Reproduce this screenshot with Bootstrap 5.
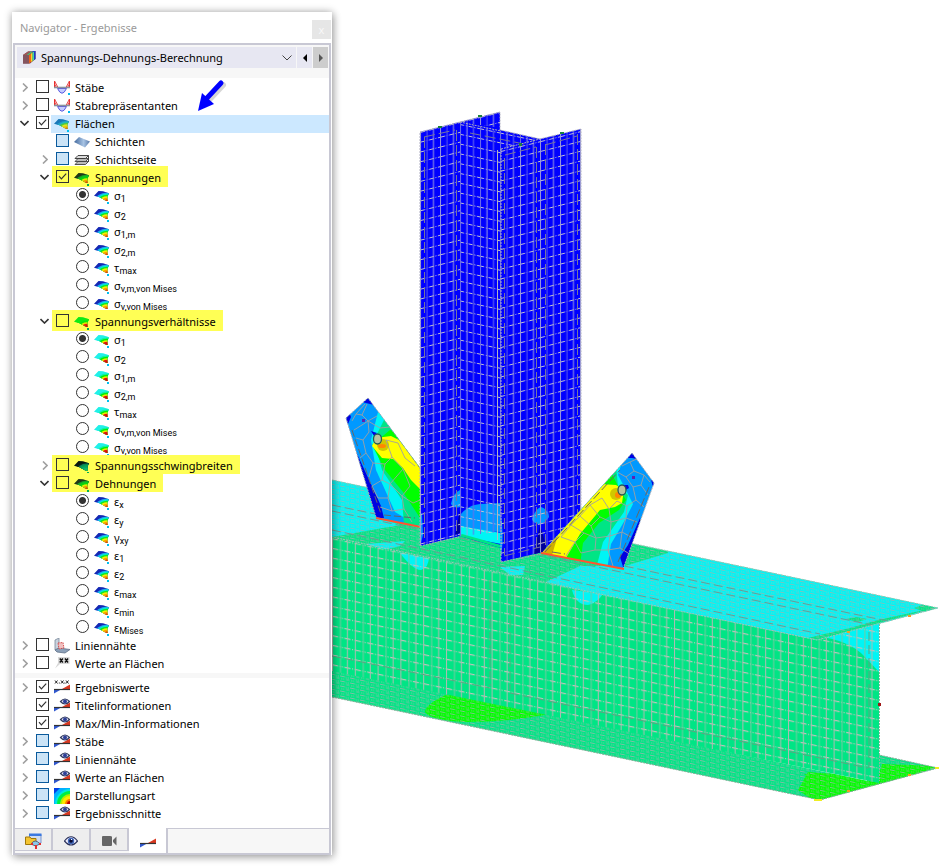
<!DOCTYPE html>
<html lang="de">
<head>
<meta charset="utf-8">
<meta name="viewport" content="width=device-width, initial-scale=1">
<title>Navigator - Ergebnisse</title>
<link href="https://cdn.jsdelivr.net/npm/bootstrap@5.3.0/dist/css/bootstrap.min.css" rel="stylesheet">
<style>
:root { --edge: #c8c8d4; --tint: #e7e7f2; }
body { font-family: "Noto Sans", "Open Sans", sans-serif; font-size: 11px; line-height: 18px; color: #000; background: #fff; }
.navigator { width: 320px; margin: 12px 0 11px 12px; background: #fff; box-shadow: 0 0 8px rgba(0,0,0,.3), 2px 3px 8px rgba(0,0,0,.2); z-index: 2; }
.nav-title { height: 31px; padding: 0 1px 0 8px; color: #9a9a9a; }
.close-btn { width: 19px; height: 19px; border: 0; background: #e6e6e6; color: #f8f8f8; font-size: 11px; line-height: 16px; }
.frame { margin: 0 1px 0 1px; border: 2px solid var(--edge); background: #f7f7f7; }
.picker { height: 21px; margin: 2px 1px 10px 2px; gap: 1px; }
.picker-box { background: var(--tint); padding-left: 6px; gap: 5px; }
.picker-box select { appearance: none; border: 0; background: transparent; font-size: 11px; height: 21px; padding: 0; color: #000; width: 100%; }
.step { width: 15px; border: 0; background: var(--tint); }
.step.off { background: #cdcdcd; }
.tree { background: #fff; padding-top: 1px; }
.tree + .tree { margin-top: 5px; padding-bottom: 5px; }
.tree-row { height: 18px; }
.level-0 { padding-left: 3px; }
.level-1 { padding-left: 23px; }
.level-2 { padding-left: 43px; }
.twist { width: 13px; height: 18px; border: 0; background: none; margin-right: 5px; }
.twist svg { margin-top: -2px; }
.box { appearance: none; flex: none; width: 13px; height: 13px; margin: 1px 5px 0 0; border: 1px solid #333; background: #fff center/11px no-repeat; border-radius: 0; }
.box[type=radio] { border-radius: 50%; }
.box[type=checkbox]:checked { background-image: url("data:image/svg+xml,%3Csvg xmlns='http://www.w3.org/2000/svg' viewBox='0 0 11 11'%3E%3Cpath d='M2 5.2l2.4 2.6L9.2 2.6' fill='none' stroke='%23333' stroke-width='1.2'/%3E%3C/svg%3E"); }
.box[type=radio]:checked { background-image: radial-gradient(#333 3px, #fff0 4px); }
.box.part { border-color: #0a5a9c; background-color: #cce4f7; }
.glow .box { background-color: #ff5; }
.glow { background: #ff5; margin: -3px 0 0 -4px; padding: 3px 7px 0 4px; height: 21px; }
.glow.tight { margin-top: -2px; padding-top: 2px; height: 19px; }
.picked .entry { flex: 1; }
.picked .shade { background: #cce8ff; flex: 1; margin-left: -3px; padding-left: 3px; }
.ico { flex: none; width: 16px; height: 16px; margin: 1px 5px 0 0; overflow: visible; }
.level-2 .ico { margin-right: 4px; }
.tree-row label { white-space: nowrap; }
.tree-row label sub { font-family: Roboto, "Noto Sans", sans-serif; font-size: 9px; bottom: -2px; line-height: 0; vertical-align: baseline; }
.tabs { background: #f7f7f7; height: 25px; }
.tab-btn { width: 38px; height: 23px; border: 1px solid var(--edge); border-width: 1px 2px 1px 0; background: #eee; padding: 0; border-radius: 0; }
.tab-btn.on { width: 39px; height: 25px; background: #fff; border-bottom: 0; border-top: 0; }
.tab-fill { border-top: 1px solid var(--edge); }
.pointer { left: 181px; top: 66px; width: 40px; height: 40px; }
.scene { min-width: 0; }
.scene svg { width: 100%; }
</style>
<script src="https://cdn.jsdelivr.net/npm/bootstrap@5.3.0/dist/js/bootstrap.bundle.min.js"></script>
</head>
<body>
<svg width="0" height="0" class="position-absolute" aria-hidden="true">
  <defs>
    <clipPath id="fan"><path d="M0 7.800L4.500 3L9 3.200L15 5.200L13.500 8.500L13.500 13L10.500 12Q6 8.500 0 7.800Z"/></clipPath>
    <symbol id="i-member" viewBox="0 0 16 16"><path d="M3.500 8.500Q8 18 12.500 8.500Z" fill="#c4ccff" stroke="#5a5ae0"/><path d="M.5 1V8M15.500 1V8" stroke="#e82c2c" stroke-width="1.200"/><path d="M.5 1L4 7.500M15.500 1L12 7.500M.5 4L2.500 7.500M15.500 4L13.500 7.500" stroke="#e84040" fill="none"/><path d="M0 7.500H16" stroke="#8a929c" stroke-width="1.600"/><path d="M14 13h2v2h-2z" fill="#00b8f0"/></symbol>
    <symbol id="i-layer" viewBox="0 0 16 16"><defs><linearGradient id="lg"><stop stop-color="#42689c"/><stop offset=".6" stop-color="#a8c4e4"/><stop offset="1" stop-color="#5878a8"/></linearGradient></defs><path d="M0 8L5 3L16 7.500L11 13.500Z" fill="url(#lg)"/></symbol>
    <symbol id="i-side" viewBox="0 0 16 16"><path d="M1 12.500L4 9.500H14.500L11.500 12.500ZM1 9.500L4 6.500H14.500L11.500 9.500Z" fill="#bbb" stroke="#444" stroke-width=".9"/><path d="M1 6.500L4 3.500H14.500L11.500 6.500Z" fill="#ddd" stroke="#333" stroke-width=".9"/><path d="M14.500 3.500V10" stroke="#444"/></symbol>
    <symbol id="i-weld" viewBox="0 0 16 16"><path d="M1 2L5 0V10L1 12Z" fill="#c8d2de" stroke="#78889a" stroke-width=".8"/><path d="M1 12L5 10L16 11.500L11 15L3 14Z" fill="#8ca0b8" stroke="#607088" stroke-width=".8"/><path d="M4 5L9 4.500L10 10L5 11Z" fill="#f0c0c0" stroke="#d04040" stroke-width=".9" stroke-dasharray="1.500 1"/></symbol>
    <symbol id="i-xx" viewBox="0 0 16 16"><path d="M4 1H15.500V8H6L1 12.500L4 7Z" fill="#d8d8d8"/><path d="M5.800 2.500l3 4m0-4l-3 4M11 2.500l3 4m0-4l-3 4" stroke="#111" stroke-width="1.400"/></symbol>
    <symbol id="i-bar" viewBox="0 0 16 16"><path d="M0 9.500H7L0 13.500Z" fill="#3058d0"/><path d="M8 9L16 4.500V9Z" fill="#d83820"/><path d="M0 9.500H16" stroke="#333" stroke-width="1.200"/></symbol>
    <symbol id="i-values" viewBox="0 0 16 16"><use href="#i-bar"/><path d="M1 .5l2.500 3m0-3L1 3.500M7 .5l2.500 3m0-3L7 3.500M12 .5l2.500 3m0-3L12 3.500M4.800 3h1M10.300 3h1" stroke="#222"/></symbol>
    <symbol id="i-eyebar" viewBox="0 0 16 16"><use href="#i-bar"/><path d="M6.500 3.500Q11 -1.500 15.500 3.500Q11 8.500 6.500 3.500Z" fill="#dde" stroke="#333c60" stroke-width="1.200"/><circle cx="11" cy="3.500" r="2" fill="#2d3f98"/></symbol>
    <symbol id="i-map" viewBox="0 0 16 16"><path d="M0 0H16V16H0Z" fill="#00b0ff"/><path d="M0 0H6L0 6Z" fill="#0040e8"/><path d="M16 1A15 15 0 0 0 1 16H16Z" fill="#00e8e0"/><path d="M16 3A13 13 0 0 0 3 16H16Z" fill="#00f040"/><path d="M16 6A10 10 0 0 0 6 16H16Z" fill="#b0f000"/><path d="M16 8A8 8 0 0 0 8 16H16Z" fill="#ffe800"/><path d="M16 11A5 5 0 0 0 11 16H16Z" fill="#ff7800"/><path d="M16 13A3 3 0 0 0 13 16H16Z" fill="#c00000"/></symbol>
  </defs>
</svg>

<div class="d-flex min-vh-100 align-items-start">
  <aside class="navigator flex-shrink-0 position-relative">
    <header class="nav-title d-flex align-items-center justify-content-between">
      <span>Navigator - Ergebnisse</span>
      <button class="close-btn p-0 mt-1" type="button" aria-label="Schließen">x</button>
    </header>
    <div class="frame">
      <div class="picker d-flex">
        <div class="picker-box d-flex flex-grow-1 align-items-center">
          <svg width="13" height="13" viewBox="0 0 13 13" class="flex-shrink-0"><path d="M0 4L5 .5L12.500 0V8L7 12.500H0Z" fill="#703848"/><path d="M0 4H6V12.500H0Z" fill="#84545f"/><path d="M6 4L8 2.500V11L6 12.500Z" fill="#f06018"/><path d="M8 2.500L9.500 1.500V10L8 11Z" fill="#f8d820"/><path d="M9.500 1.500L11 .5V9L9.500 10Z" fill="#40d8a0"/><path d="M11 .5L12.500 0V8L11 9Z" fill="#1838c8"/><path d="M0 4L5 .5L8 .5L3.500 4Z" fill="#a05858"/><path d="M3.500 4L8 .5L10 .5L6 4Z" fill="#50b878"/><path d="M9 1L10 0L12.500 0L11 1Z" fill="#2848d0"/></svg>
          <select id="calc" aria-label="Berechnung"><option>Spannungs-Dehnungs-Berechnung</option></select>
          <svg width="10" height="6" viewBox="0 0 10 6" class="flex-shrink-0 me-1"><path d="M.5 .5L5 5L9.500 .5" fill="none" stroke="#444"/></svg>
        </div>
        <button class="step p-0" type="button" aria-label="Zurück"><svg width="4" height="8" viewBox="0 0 4 8" class="d-block mx-auto"><path d="M4 0V8L0 4Z"/></svg></button>
        <button class="step off p-0" type="button" aria-label="Weiter"><svg width="4" height="8" viewBox="0 0 4 8" class="d-block mx-auto"><path d="M0 0V8L4 4Z" fill="#555"/></svg></button>
      </div>
      <div class="tree" id="results"></div>
      <div class="tree" id="display"></div>
      <nav class="tabs d-flex" aria-label="Navigatoren">
        <button class="tab-btn" type="button" aria-label="Daten"><svg width="17" height="16" viewBox="0 0 17 16"><path d="M4.500 1.500H16V10H4.500Z" fill="#cfdcf0" stroke="#7a98d0"/><path d="M4 .5H16.500V3H4Z" fill="#3a78e0"/><path d="M.5 4H5L6 5.500H11V11.500H.5Z" fill="#f4c430" stroke="#a07808"/><path d="M6 11Q10 5 15 11L10.500 13Z" fill="#8cc8e8" stroke="#567"/><path d="M10 12h2v4h-2zM6 10h2v2h-2zM14 10h2v2h-2z" fill="#e03030"/></svg></button>
        <button class="tab-btn" type="button" aria-label="Zeigen"><svg width="14" height="10" viewBox="0 0 14 10"><path d="M.5 5Q7 -3.500 13.500 5Q7 13 .5 5Z" fill="#eef" stroke="#2a3058" stroke-width="1.200"/><circle cx="7" cy="5" r="3.200" fill="#3f66b8"/><circle cx="7" cy="5" r="1.800" fill="#0a0a30"/><path d="M7 3h1v1h-1z" fill="#fff"/></svg></button>
        <button class="tab-btn" type="button" aria-label="Ansichten"><svg width="15" height="10" viewBox="0 0 15 10"><path d="M0 1Q0 0 1 0H8Q10 0 10 1V9Q10 10 9 10H1Q0 10 0 9ZM11 4L14.500 .5V9.500L11 6Z" fill="#666"/></svg></button>
        <button class="tab-btn on" type="button" aria-label="Ergebnisse"><svg width="16" height="16"><use href="#i-bar"/></svg></button>
        <div class="tab-fill flex-grow-1"></div>
      </nav>
    </div>
    <svg class="pointer position-absolute" viewBox="0 0 40 40" aria-hidden="true"><path d="M29 5L14 21" stroke="#999" stroke-opacity=".4" stroke-width="6" stroke-linecap="round" transform="translate(1 2)"/><path d="M28 5L14 20" stroke="#00f" stroke-width="5" stroke-linecap="round"/><path d="M5 33L9 15L21 26Z" fill="#00f"/></svg>
  </aside>

  <main class="scene flex-grow-1">
    <svg viewBox="332 0 609 866" class="d-block" role="img" aria-label="Spannungsverteilung am Knoten">
      <defs>
        <pattern id="flange" width="20" height="9.800" patternUnits="userSpaceOnUse" patternTransform="translate(420 132) skewY(-14)"><path d="M0 .5H20" stroke="#c4c4cc" stroke-dasharray="5 1.500 1 1.500"/><path d="M.5 0V10M13.500 0V10" stroke="#9898dc"/><path d="M7 0V10" stroke="#5c5ce8"/></pattern>
        <pattern id="colweb" width="20" height="9.800" patternUnits="userSpaceOnUse" patternTransform="translate(460 124) skewY(12)"><path d="M0 .5H20" stroke="#c4c4cc" stroke-dasharray="4 2 1 1.500"/><path d="M.5 0V10M13.500 0V10" stroke="#6c6ce8"/><path d="M7 0V10" stroke="#a0a0e0"/></pattern>
        <pattern id="beamweb" width="22.800" height="9.700" patternUnits="userSpaceOnUse" patternTransform="translate(332 538) skewY(11.700)"><path d="M0 .5H22.800" stroke="#c2c2bc" stroke-width="1.200" stroke-dasharray="6 1.500 1 1.500 1 1.500"/><path d="M.5 0V9.700M15.500 0V9.700" stroke="#b0bab2"/><path d="M8.500 0V9.700" stroke="#74c8a0"/></pattern>
        <pattern id="dense" width="10" height="5" patternUnits="userSpaceOnUse" patternTransform="skewY(11.700)"><path d="M0 .5H5M6 3H9.500" stroke="#a0b4ae" stroke-opacity=".8"/><path d="M6 1h1M8 1h1M1 3h1M3 3h1" stroke="#b0b8b0" stroke-opacity=".8"/></pattern>
        <clipPath id="top"><path d="M332 480L938 608L817 640L332 538Z"/></clipPath>
        <clipPath id="web"><path d="M332 537L807 637L879 623V783L332 671Z"/></clipPath>
        <clipPath id="bottom"><path d="M332 668L867 781L879 755L938 768L820 800L332 697Z"/></clipPath>
        <clipPath id="gl"><path d="M346 418L368 398L420 468V527L376 517Z"/></clipPath>
        <clipPath id="gr"><path d="M632 453L654 483L623 569L542 553Z"/></clipPath>
        <clipPath id="col"><path d="M420 132L500 112V130L540 139L581 129V543L501 562V548L460 536L420 546Z"/></clipPath>
      </defs>

      <g clip-path="url(#bottom)">
        <path d="M332 660H941V810H332Z" fill="#00e585"/>
        <path d="M450 693Q500 696 522 706L550 714Q510 722 465 722Q430 720 425 712Q425 704 450 693Z" fill="#0f0"/>
        <path d="M798 790L808 772L878 778L882 764L941 766L820 805ZM804 774L850 773L870 779L818 784Z" fill="#0f0"/>
        <path d="M332 660H941V810H332Z" fill="url(#dense)"/>
      </g>
      <path d="M332 697L820 800L938 768L879 755" fill="none" stroke="#8aab98" stroke-dasharray="2 1"/>

      <g clip-path="url(#web)">
        <path d="M332 530H880V790H332Z" fill="#00e585"/>
        <path d="M397 549Q412 570 421 570Q429 568 429 556ZM572 590Q576 605 588 605Q597 603 603 594Z" fill="#00f5f5"/>
        <path d="M815 636Q850 640 865 657L879 672V620Z" fill="#00f5f5"/>
        <path d="M332 530H880V790H332Z" fill="url(#beamweb)"/>
        <path d="M332 656L490 688M510 693L868 768M490 580V686M510 580V690M869 632V768" fill="none" stroke="#5ca582" stroke-dasharray="9 4"/>
      </g>
      <path d="M879.500 624V781" stroke="#88b8a0" stroke-dasharray="2 1"/>

      <g clip-path="url(#top)">
        <path d="M332 470H941V650H332Z" fill="#00e585"/>
        <path d="M332 470L376 476V516L400 525L332 537Z" fill="#00f5f5"/>
        <path d="M366 544L405 541L400 546L384 550ZM500 567L525 566L523 575L510 575ZM546 582L580 566L625 566L668 553L665 540L941 590V620L820 650Z" fill="#00f5f5"/>
        <path d="M914 608L925 604L938 608L925 612ZM846 619L856 617L867 619L858 622ZM808 638L820 635L850 628L878 620L938 607L817 640Z" fill="#00e585"/>
        <path d="M332 470H941V650H332Z" fill="url(#dense)"/>
        <path d="M332 505L940 632M332 511L900 631M332 530L820 634" stroke="#6f9a92" stroke-dasharray="9 4"/>
      </g>
      <path d="M332 480L938 608L817 640L332 537" fill="none" stroke="#a2c4b8" stroke-dasharray="2 1"/>

      <g clip-path="url(#gl)">
        <path d="M340 390H421V530H340Z" fill="#0099ff"/>
        <path d="M378 412L371 440L376 470L395 512L420 527V390Z" fill="#00f5f5"/>
        <path d="M385 418L374 440L382 470L402 500L404 525H425V420Z" fill="#00e585"/>
        <path d="M390 430L372 445L385 470L403 492L420 518V440Z" fill="#0f0"/>
        <path d="M376 438L391 436L399 440L425 470V494L411 480L403 468L393 459L382 458L372 446Z" fill="#ff0"/>
        <ellipse cx="383" cy="445" rx="6" ry="6" fill="#d0c800"/><ellipse cx="382" cy="446" rx="4" ry="2" fill="#f80"/>
        <path d="M362 402L368 397L374 405L366 403ZM345 419L349 412L351 417L348 424ZM355 450L359 458L381 506L384 518L375 518ZM371 431L377 433L374 436Z" fill="#0000e0"/>
        <path d="M352 421L356 414L362 415L368 421L377 416M356 414L365 404M362 415L367 404M354 430L362 425L368 421L369 432L363 440L356 438M368 421L380 428L390 427M363 440L366 453L360 458M366 453L373 463L369 477M373 463L385 464L392 457L386 440L398 443L405 458L415 466M392 457L403 469L410 486L402 496L413 503L420 500M385 464L382 480L390 484L388 498M382 480L372 486L378 498L388 498L392 511L404 509L402 496L390 484L403 469M392 511L380 507M404 509L412 522" fill="none" stroke="#a0a0a0" stroke-width=".9"/>
        <path d="M389 425L425 475M352 430L381 514M384 515L415 518" stroke="#666" stroke-dasharray="7 3"/>
      </g>
      <path d="M376 517L346 418L368 398L420 468" fill="none" stroke="#a8a8b0" stroke-dasharray="2 1"/>
      <ellipse cx="377.500" cy="439" rx="4" ry="5" fill="#b8c4a0" stroke="#245858" stroke-width="1.300"/>
      <path d="M362 419h3v3h-3z" fill="#6020b0"/>
      <path d="M376 518L421 527" stroke="#ff5530" stroke-width="2"/>

      <g clip-path="url(#col)">
        <path d="M415 100H590V570H415Z" fill="#00f"/>
        <path d="M460 510L455 535L462 532Z" fill="#00009c"/>
        <path d="M460 515Q468 505 480 504L501 503V532L460 530Z" fill="#0099ff"/>
        <path d="M460 526L501 533V544L460 536Z" fill="#00f5f5"/>
        <path d="M459 536L462 534L501 545V566L460 546Z" fill="#00e585"/>
        <path d="M460 490V507Q454 509 451 504Q453 493 460 490ZM419 508L422 515L423 535L420 547ZM500 508Q504 530 502 549L500 562ZM532 519Q536 508 541 507Q549 510 549 517Q545 524 538 524Q533 523 532 519Z" fill="#0099ff"/>
        <path d="M540 525L533 557L548 552Z" fill="#00009c"/>
        <path d="M420 100H460V570H420Z" fill="url(#flange)"/><path d="M460 112L501 108V128L460 122Z" fill="url(#flange)"/>
        <path d="M460 122L540 139L501 149V532L460 536Z" fill="url(#colweb)"/>
        <path d="M501 149L581 129V550L501 565Z" fill="url(#flange)"/>
        <path d="M424.500 137V543M456.500 130V536M504.500 158V555M536.500 147V552M545.500 144V550M577.500 134V540M424 137L455 130M470 133L524 144M505 155L536 147M545 145L577 136M504 556L540 547" fill="none" stroke="#77779c" stroke-dasharray="11 4"/>
        <path d="M497.500 150V540" stroke="#b4b4bc"/>
      </g>
      <path d="M420 546V132L500 112V130L540 139L581 129V510M501 149V562M501 149L540 139M460 122L501 131" fill="none" stroke="#aeaec0" stroke-dasharray="2 1"/>
      <path d="M420 546L459 537M501 562L541 554" stroke="#9cb4ac" stroke-dasharray="2 1"/>
      <path d="M438 126h4v2h-4zM478 115h4v2h-4zM519 143h3v3h-3zM560 132h4v2h-4z" fill="#1c8040"/>

      <g clip-path="url(#gr)">
        <path d="M535 445H660V575H535Z" fill="#0099ff"/>
        <path d="M622 462L618 475L626 490L633 504L625 520L611 544L607 570L540 560V450Z" fill="#00f5f5"/>
        <path d="M616 466L618 486L628 495L624 512L603 542L597 565H540V460Z" fill="#00e585"/>
        <path d="M610 470L617 484L626 500L619 510L599 523L583 543L580 565H540V465Z" fill="#0f0"/>
        <path d="M600 484L616 485L624 490L622 503L615 507L600 510L580 534L566 558H536Z" fill="#ff0"/>
        <ellipse cx="616" cy="494" rx="6" ry="6" fill="#d0c800"/><ellipse cx="618" cy="495" rx="3" ry="3" fill="#f80"/>
        <path d="M628 458L632 452L637 459L632 458ZM651 480L656 479L653 487ZM640 518L641 526L630 552L624 570L620 557L628 545ZM623 485L628 485L629 488L624 491Z" fill="#0000e0"/>
        <path d="M558 535L552 555L542 553Z" fill="#d0b000"/>
        <path d="M630 462L639 458M622 466L630 462L634 471L626 477L619 473M634 471L644 475L650 482M644 475L641 485L633 487L626 477M641 485L648 495M633 487L636 500L644 507M636 500L627 506L626 518L637 522M627 506L617 501L609 509L611 522L626 518L622 532L610 536L611 522L600 517L591 526L596 538L610 536L608 550L595 550L596 538L584 533L575 542L581 553L595 550M609 509L602 498L590 505L600 517M590 505L580 516L591 526M580 516L571 525L584 533M571 525L561 537L575 542L566 556M622 532L631 537M622 532L620 548L608 550L613 566M620 548L628 553" fill="none" stroke="#a0a0a0" stroke-width=".9"/>
        <path d="M545 552L620 470M552 552L565 554M618 562L649 487" stroke="#666" stroke-dasharray="9 3"/>
      </g>
      <path d="M542 553L632 453L654 483L623 569" fill="none" stroke="#a8a8b0" stroke-dasharray="2 1"/>
      <ellipse cx="622" cy="490" rx="4" ry="5" fill="#b8c4a0" stroke="#245858" stroke-width="1.300"/>
      <path d="M632 476h3v3h-3z" fill="#6020b0"/>
      <path d="M541 553L624 569" stroke="#ff5530" stroke-width="2"/>
      <path d="M847 631h3v2h-3zM908 615h3v2h-3zM847 790h3v2h-3zM908 774h3v2h-3z" fill="#f5a020"/>
      <path d="M878 703h3v3h-3z" fill="#a01818"/><path d="M814 799h8v2h-8zM935 767h4v2h-4z" fill="#ee2"/>
    </svg>
  </main>
</div>

<script>
// Colour bands of the surface icons, from the cold outer edge to the hot corner.
const bands = {
  stress: ['#1428b4', '#20a0f0', '#00e8d8', '#10e820', '#f8f000', '#ff9c00', '#d81010'],
  ratio: ['#20f0e8', '#20f0e8', '#10f0a0', '#00f000', '#f0e800', '#e01010', '#c00808'],
  hotStress: ['#203818', '#189828', '#10c020', '#08d808', '#e0f000', '#f0a000', '#d81010'],
  hotRatio: ['#10e818', '#10f010', '#10e818', '#08e808', '#e8e000', '#e82010', '#c00808'],
  range: ['#081810', '#0a2818', '#0a8058', '#08a050', '#08a868', '#18b868', '#30c840'],
  flat: ['#1878b8', '#2098c8', '#20b8c0', '#50c840', '#d8e820', '#f0c010', '#c85810']
};
const radii = [20, 8.6, 7.4, 6.3, 4.8, 3.2, 1.6];

function icon(name) {
  if (!bands[name]) return `<svg class="ico" aria-hidden="true"><use href="#i-${name}"/></svg>`;
  const rings = radii.map((r, i) => `<ellipse cx="13" cy="13" rx="${r * 1.4}" ry="${r}" fill="${bands[name][i]}"/>`).join('');
  const dot = /hot|range/.test(name) ? '#00b050' : '#00c0f0';
  return `<svg class="ico" viewBox="0 0 16 16" aria-hidden="true"><g clip-path="url(#fan)">${rings}</g><path d="M13 14h2v2h-2z" fill="${dot}"/></svg>`;
}

const arrows = {
  '>': '<svg width="6" height="9" viewBox="0 0 6 9"><path d="M1 .5L5 4.500L1 8.500" fill="none" stroke="#a0a0a0" stroke-width="1.600"/></svg>',
  'v': '<svg width="9" height="6" viewBox="0 0 9 6"><path d="M.5 1L4.500 5L8.500 1" fill="none" stroke="#333" stroke-width="1.600"/></svg>'
};

let count = 0;
// level, arrow, state (0 off, 1 on, 2 partial), icon, label, extra class, radio group
function row([level, arrow, state, ico, label, extra = '', group = '']) {
  const id = 'n' + (++count);
  const twist = arrow
    ? `<button class="twist p-0 d-flex align-items-center justify-content-center" type="button" aria-label="${arrow === 'v' ? 'Zuklappen' : 'Aufklappen'}">${arrows[arrow]}</button>`
    : '<span class="twist"></span>';
  const type = group ? 'radio' : 'checkbox';
  const box = `<input class="box ${state === 2 ? 'part' : ''}" type="${type}" id="${id}" ${group ? `name="${group}"` : ''} ${state === 1 ? 'checked' : ''}>`;
  const text = `${icon(ico)}<label for="${id}">${label}</label>`;
  const picked = extra === 'picked';
  return `<div class="tree-row level-${level} d-flex ${picked ? extra : ''}">${twist}<div class="entry d-flex ${picked ? '' : extra}">${box}${picked ? `<div class="shade d-flex">${text}</div>` : text}</div></div>`;
}

const sub = (a, b) => `${a}<sub>${b}</sub>`;
const radios = (list, ico, group) => list.map(([a, b], i) => [2, '', i ? 0 : 1, ico, sub(a, b), '', group]);
const sigma = [['σ', '1'], ['σ', '2'], ['σ', '1,m'], ['σ', '2,m'], ['τ', 'max'], ['σ', 'v,m,von Mises'], ['σ', 'v,von Mises']];
const strain = [['ε', 'x'], ['ε', 'y'], ['γ', 'xy'], ['ε', '1'], ['ε', '2'], ['ε', 'max'], ['ε', 'min'], ['ε', 'Mises']];

document.getElementById('results').innerHTML = [
  [0, '>', 0, 'member', 'Stäbe'],
  [0, '>', 0, 'member', 'Stabrepräsentanten'],
  [0, 'v', 1, 'flat', 'Flächen', 'picked'],
  [1, '', 2, 'layer', 'Schichten'],
  [1, '>', 2, 'side', 'Schichtseite'],
  [1, 'v', 1, 'hotStress', 'Spannungen', 'glow'],
  ...radios(sigma, 'stress', 'stress'),
  [1, 'v', 0, 'hotRatio', 'Spannungsverhältnisse', 'glow'],
  ...radios(sigma, 'ratio', 'ratio'),
  [1, '>', 0, 'range', 'Spannungsschwingbreiten', 'glow tight'],
  [1, 'v', 0, 'hotStress', 'Dehnungen', 'glow tight'],
  ...radios(strain, 'stress', 'strain'),
  [0, '>', 0, 'weld', 'Liniennähte'],
  [0, '>', 0, 'xx', 'Werte an Flächen']
].map(row).join('');

document.getElementById('display').innerHTML = [
  [0, '>', 1, 'values', 'Ergebniswerte'],
  [0, '', 1, 'eyebar', 'Titelinformationen'],
  [0, '', 1, 'eyebar', 'Max/Min-Informationen'],
  [0, '>', 2, 'eyebar', 'Stäbe'],
  [0, '>', 2, 'eyebar', 'Liniennähte'],
  [0, '>', 2, 'eyebar', 'Werte an Flächen'],
  [0, '>', 2, 'map', 'Darstellungsart'],
  [0, '>', 2, 'eyebar', 'Ergebnisschnitte']
].map(row).join('');
</script>
</body>
</html>
